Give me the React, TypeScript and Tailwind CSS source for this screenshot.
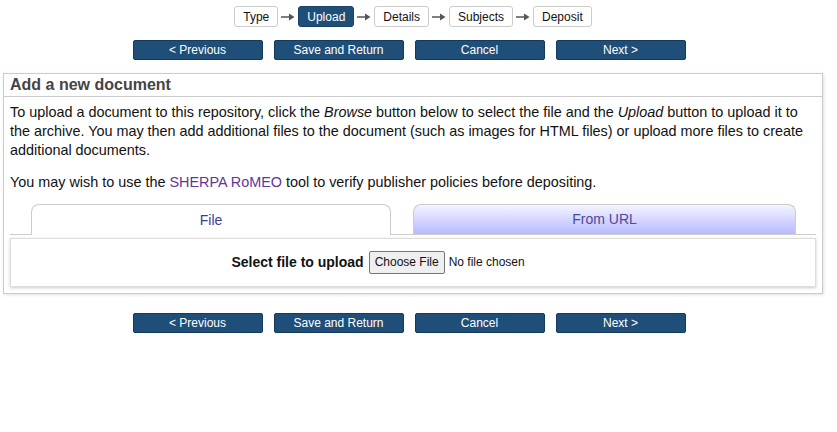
const steps = ["Type", "Upload", "Details", "Subjects", "Deposit"];
const actions = ["< Previous", "Save and Return", "Cancel", "Next >"];

function Arrow() {
  return (
    <svg width="14" height="8" viewBox="0 0 14 8" className="mx-[3px]">
      <path d="M0 4h9" stroke="#555" strokeWidth="1.5" />
      <path d="M8 0.5L13.5 4L8 7.5z" fill="#555" />
    </svg>
  );
}

function ActionBar() {
  return (
    <div className="flex justify-center gap-[11px] pr-[8px]">
      {actions.map((a) => (
        <button
          key={a}
          className="w-[130px] h-[20px] rounded-[2px] border border-[#153a5c] bg-[#1f4e78] text-white text-[12px] leading-none"
        >
          {a}
        </button>
      ))}
    </div>
  );
}

export default function App() {
  return (
    <div className="w-[837px] h-[432px] bg-white font-['Liberation_Sans',Arial,sans-serif] text-[#111]">
      <div className="w-[820px] ml-[3px] pt-[6px]">
        {/* workflow steps */}
        <div className="flex items-center justify-center">
          {steps.map((s, i) => (
            <div key={s} className="flex items-center">
              {i > 0 && <Arrow />}
              <div
                className={
                  s === "Upload"
                    ? "h-[21px] px-[8px] flex items-center rounded-[3px] border border-[#1a4268] bg-[#1f4e78] text-white text-[12px]"
                    : "h-[21px] px-[8px] flex items-center rounded-[3px] border border-[#ccc] bg-white text-[12px]"
                }
              >
                {s}
              </div>
            </div>
          ))}
        </div>

        <div className="mt-[13px]">
          <ActionBar />
        </div>

        {/* main panel */}
        <div className="mt-[13px] border border-[#ccc] shadow-[1px_1px_3px_rgba(0,0,0,0.12)] pb-[6px]">
          <div className="h-[23px] border-b border-[#ccc] px-[6px] flex items-center">
            <h1 className="text-[16px] font-bold text-[#444]">Add a new document</h1>
          </div>
          <div className="px-[6px] pt-[6px] text-[14.4px] leading-[19px]">
            <p>
              To upload a document to this repository, click the <em>Browse</em> button below to select the file and the{" "}
              <em>Upload</em> button to upload it to the archive. You may then add additional files to the document (such as
              images for HTML files) or upload more files to create additional documents.
            </p>
            <p className="mt-[13px]">
              You may wish to use the <a className="text-[#663399]">SHERPA RoMEO</a> tool to verify publisher policies before
              depositing.
            </p>

            {/* tabs */}
            <div className="mt-[12px] flex items-end h-[31px] border-b border-[#ccc] pl-[21px]">
              <div className="w-[360px] h-[31px] -mb-px rounded-t-[8px] border border-b-0 border-[#ccc] bg-white flex items-center justify-center text-[14px] text-[#3b3b9a]">
                File
              </div>
              <div className="ml-[22px] w-[383px] h-[30px] rounded-t-[8px] border border-b-0 border-[#ccc] bg-gradient-to-b from-[#f4f4ff] to-[#b9b9ff] flex items-center justify-center text-[14px] text-[#4a4a9a]">
                From URL
              </div>
            </div>
            <div className="mt-[3px] h-[49px] border border-[#ddd] shadow-[0_1px_3px_rgba(0,0,0,0.2)] flex items-center justify-center gap-[5px]">
              <span className="font-bold text-[14px]">Select file to upload</span>
              <input type="file" className="w-[226px] text-[12px] font-['Liberation_Sans',Arial,sans-serif] file:mr-[4px] file:px-[5px] file:py-[1px] file:border file:border-[#767676] file:rounded-[2px] file:bg-[#efefef] file:text-[12px]" />
            </div>
          </div>
        </div>

        <div className="mt-[19px]">
          <ActionBar />
        </div>
      </div>
    </div>
  );
}
